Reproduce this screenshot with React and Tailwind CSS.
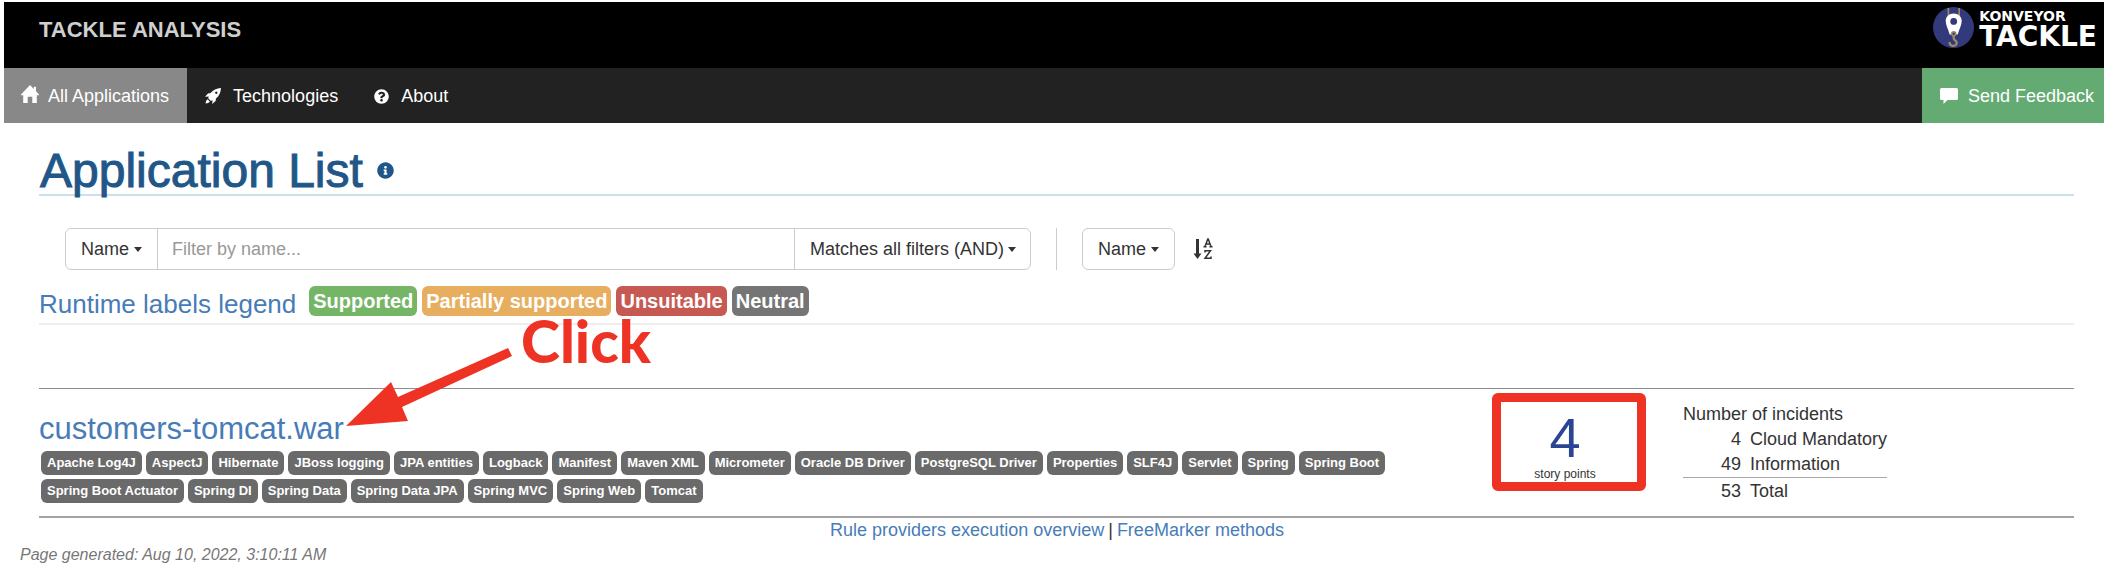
import { FaQuestionCircle, FaInfoCircle } from "react-icons/fa";

const tags = [
  "Apache Log4J", "AspectJ", "Hibernate", "JBoss logging", "JPA entities", "Logback", "Manifest",
  "Maven XML", "Micrometer", "Oracle DB Driver", "PostgreSQL Driver", "Properties", "SLF4J",
  "Servlet", "Spring", "Spring Boot", "Spring Boot Actuator", "Spring DI", "Spring Data",
  "Spring Data JPA", "Spring MVC", "Spring Web", "Tomcat",
];

const legend = [
  ["Supported", "bg-[#74b566]"],
  ["Partially supported", "bg-[#e8ae60]"],
  ["Unsuitable", "bg-[#c65a52]"],
  ["Neutral", "bg-[#757575]"],
];

function Caret() {
  return <span aria-hidden="true" className="border-x-4 border-t-5 border-x-transparent border-t-[#333]" />;
}

function HomeIcon() {
  return (
    <svg viewBox="0 0 18 18" className="-mt-1 size-[18px]" fill="currentColor" aria-hidden="true">
      <path d="M9 0 12.800 3.900V1.800H15v4.400L18 9.600V10.200H15.800V18H11.300V11.800H6.700V18H2.200V10.200H0V9.600z" />
    </svg>
  );
}

function RocketIcon() {
  return (
    <svg viewBox="0 0 16 16" className="size-4" fill="currentColor" aria-hidden="true">
      <path
        fillRule="evenodd"
        d="M16 0C11.500.300 8 1.800 5.600 5L3 5.400 0 8.800 3.800 8.400C3.500 9.100 3.300 9.700 3.200 10.300L5.700 12.800C6.300 12.700 6.900 12.500 7.600 12.200L7.200 16 10.600 13 11 10.400C14.200 8 15.700 4.500 16 0zM11.300 3.500a1.200 1.200 0 1 0 .010 0z"
      />
      <path d="M2.600 11.200C1.400 11.800.800 13.400.600 15.400 2.600 15.200 4.200 14.600 4.800 13.400z" />
    </svg>
  );
}

function Logo() {
  return (
    <a href="#konveyor" aria-label="Konveyor Tackle" className="flex items-start gap-[5px] text-white">
      <svg viewBox="0 0 41 41" className="mt-[5px] size-[41px]" aria-hidden="true">
        <circle cx="20.500" cy="20.500" r="20.500" fill="#333a7c" />
        <path d="M15.400 1v10M26.200 1v10" stroke="#a08a63" strokeWidth="1.600" />
        <path
          fillRule="evenodd"
          fill="#fff"
          d="M20.700 6.500C16 6.500 12.700 9.800 12.700 14c0 4 2.600 8.500 4 13.500h8c1.400-5 4-9.500 4-13.500 0-4.200-3.300-7.500-8-7.500zM20.700 11a3.400 3.400 0 1 1 0 6.800 3.400 3.400 0 0 1 0-6.800z"
        />
        <circle cx="20.700" cy="26.800" r="2" fill="#333a7c" stroke="#a08a63" strokeWidth="1.600" />
        <path d="M20.700 29v2.500c0 1.500 3 2 3 4.500s-3 3.500-5.200 2.500c-1.400-.600-2-2-1.800-3.500" fill="none" stroke="#a08a63" strokeWidth="2.300" />
      </svg>
      <span className="flex flex-col pt-[6px] font-['DejaVu_Sans',sans-serif] font-bold">
        <span className="text-sm leading-4">KONVEYOR</span>
        <span className="text-[28px] leading-[26px]">TACKLE</span>
      </span>
    </a>
  );
}

export default function App() {
  return (
    <div className="bg-white pt-[2px] pr-[10px] pl-1 font-['Liberation_Sans',Arial,sans-serif] text-lg leading-[25px] text-[#333]">
      <header>
        <div className="flex h-[66px] items-start justify-between bg-black pr-[7px] pl-[35px]">
          <div className="pt-4 text-[22px] leading-6 font-bold text-[#cfcfcf]">TACKLE ANALYSIS</div>
          <Logo />
        </div>
        <nav className="flex h-[55px] bg-[#222] pt-px text-white">
          <a href="#applications" className="-mt-px flex items-center gap-[9px] bg-[#888] pt-px pr-[18px] pl-[17px]">
            <HomeIcon />
            All Applications
          </a>
          <a href="#technologies" className="flex items-center gap-3 px-[18px]">
            <RocketIcon />
            Technologies
          </a>
          <a href="#about" className="flex items-center gap-3 px-[18px]">
            <FaQuestionCircle className="size-[15px]" />
            About
          </a>
          <a href="#feedback" className="-mt-px ml-auto flex items-center gap-[10px] bg-[#63ab72] pt-px pr-[10px] pl-[18px]">
            <svg viewBox="0 0 18 16" className="h-4 w-[18px]" fill="currentColor" aria-hidden="true">
              <path d="M1.500 0h15A1.500 1.500 0 0 1 18 1.500v9a1.500 1.500 0 0 1-1.500 1.500H7.500L3.500 16v-4h-2A1.500 1.500 0 0 1 0 10.500v-9A1.500 1.500 0 0 1 1.500 0z" />
            </svg>
            Send Feedback
          </a>
        </nav>
      </header>

      <main className="pr-[30px] pl-[35px]">
        <h1 className="flex items-center gap-[14px] border-b-2 border-[#c9e1ec] pt-6 pl-px text-5xl leading-[47px] text-[#205788] [-webkit-text-stroke:1px_#205788]">
          Application List
          <FaInfoCircle className="size-[17px] stroke-0" />
        </h1>

        <div className="flex h-[74px] items-end pl-[26px]">
          <div className="flex h-[42px] w-[966px] rounded-md border border-[#ccc]">
            <button className="flex items-center gap-[5px] px-[15px]">Name <Caret /></button>
            <input
              aria-label="Filter by name"
              placeholder="Filter by name..."
              className="min-w-0 flex-1 border-x border-[#ccc] px-[14px] placeholder:text-[#999]"
            />
            <button className="flex items-center gap-1 pr-[14px] pl-[15px]">Matches all filters (AND) <Caret /></button>
          </div>
          <div className="ml-[25px] h-[42px] w-px bg-[#ccc]" />
          <button className="ml-[25px] flex h-[42px] items-center gap-[5px] rounded-md border border-[#ccc] px-[15px]">
            Name <Caret />
          </button>
          <button aria-label="Sort ascending" className="ml-[18px] flex h-[42px] items-center">
            <svg viewBox="0 0 20 22" className="h-[22px] w-5" fill="none" stroke="#333" aria-hidden="true">
              <path d="M4.500 1v15" strokeWidth="3" />
              <path d="M.500 15.500h8L4.500 21z" fill="#333" stroke="none" />
              <path d="M12 8.500 14.800 1h.4L18 8.500M13 6h4M10.500 8.700h3M16.500 8.700h3M12 14.500v-1.700h5.500L12 20.300h6V18.500" strokeWidth="1.500" />
            </svg>
          </button>
        </div>

        <div className="flex h-[55px] items-start gap-[5px] border-b-2 border-[#eee] pt-4">
          <h2 className="mr-2 pt-1 text-[26px] leading-7">
            <a href="#legend" className="text-[#477cb8]">Runtime labels legend</a>
          </h2>
          {legend.map(([name, color]) => (
            <span key={name} className={`rounded-md px-1 text-xl leading-[30px] font-bold text-white ${color}`}>
              {name}
            </span>
          ))}
        </div>

        <section className="relative mt-[63px] flex h-[130px] items-start border-t border-b-2 border-t-[#8c8c8c] border-b-[#a3a3a3]">
          <div className="w-[1420px]">
            <h2 className="pt-6 text-[31px] leading-8">
              <a href="#customers" className="text-[#477cb8]">customers-tomcat.war</a>
            </h2>
            <ul className="flex flex-wrap gap-1 pt-[6px] pl-[2px]">
              {tags.map((tag) => (
                <li key={tag} className="rounded-md bg-[#6a6a6a] px-[6px] text-[13px] leading-6 font-bold text-white">
                  {tag}
                </li>
              ))}
            </ul>
          </div>
          <div className="mt-1 ml-[33px] flex h-[98px] w-[154px] flex-col items-center rounded-md border-9 border-[#ee3224] pt-3 pr-2">
            <span className="text-[56px] leading-12 text-[#2a4593]">4</span>
            <span className="text-xs leading-6">story points</span>
          </div>
          <table className="mt-[13px] ml-[37px] border-collapse">
            <caption className="text-left">Number of incidents</caption>
            <tbody>
              <tr><td className="w-[58px] text-right">4</td><td className="pl-[9px]">Cloud Mandatory</td></tr>
              <tr><td className="text-right">49</td><td className="pl-[9px]">Information</td></tr>
              <tr className="border-t border-[#aaa]"><td className="pt-px text-right">53</td><td className="pt-px pl-[9px]">Total</td></tr>
            </tbody>
          </table>
          <svg viewBox="0 0 168 80" className="absolute top-[-42px] left-[307px] h-[80px] w-[168px]" fill="#ee3224" aria-hidden="true">
            <path d="M0 79 45 35 52 50 162 1 166 9 56 60 62 74z" />
          </svg>
          <span className="absolute top-[-78px] left-[482px] font-['Lato',sans-serif] text-[59px] leading-[60px] font-black text-[#ee3224]">Click</span>
        </section>
      </main>

      <footer>
        <div className="flex justify-center gap-1 pl-[6px]">
          <a href="#rules" className="text-[#477cb8]">Rule providers execution overview</a>
          <span>|</span>
          <a href="#freemarker" className="text-[#477cb8]">FreeMarker methods</a>
        </div>
        <p className="pl-4 text-base leading-6 text-[#777] italic">Page generated: Aug 10, 2022, 3:10:11 AM</p>
      </footer>
    </div>
  );
}
